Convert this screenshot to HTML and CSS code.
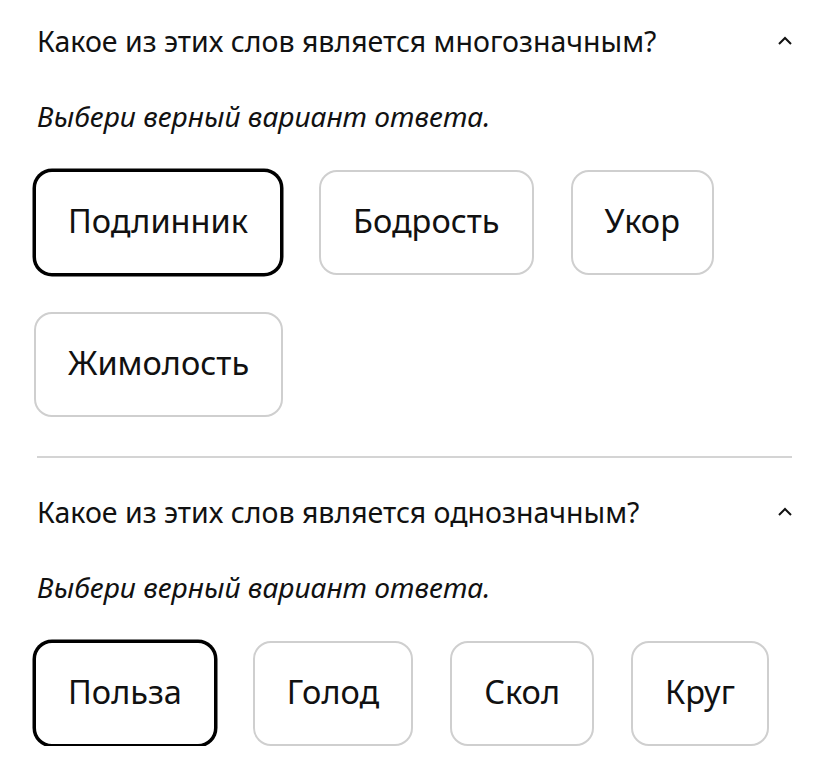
FILE: index.html
```html
<!DOCTYPE html>
<html lang="ru">
<head>
<meta charset="utf-8">
<link rel="stylesheet" href="styles.css">
</head>
<body>
<section class="q">
  <div class="q-head">
    <h2 class="q-title">Какое из этих слов является многозначным?</h2>
    <svg class="chev" width="16" height="16" viewBox="0 0 16 16"><polyline points="2,11 8,5 14,11" fill="none" stroke="#111" stroke-width="2"/></svg>
  </div>
  <p class="q-hint">Выбери верный вариант ответа.</p>
  <div class="opts">
    <button class="opt sel">Подлинник</button>
    <button class="opt">Бодрость</button>
    <button class="opt">Укор</button>
    <button class="opt">Жимолость</button>
  </div>
</section>
<hr class="div">
<section class="q">
  <div class="q-head">
    <h2 class="q-title">Какое из этих слов является однозначным?</h2>
    <svg class="chev" width="16" height="16" viewBox="0 0 16 16"><polyline points="2,11 8,5 14,11" fill="none" stroke="#111" stroke-width="2"/></svg>
  </div>
  <p class="q-hint">Выбери верный вариант ответа.</p>
  <div class="opts">
    <button class="opt sel">Польза</button>
    <button class="opt">Голод</button>
    <button class="opt">Скол</button>
    <button class="opt">Круг</button>
  </div>
</section>
</body>
</html>
```
FILE: styles.css
```css
html, body {
  margin: 0;
  padding: 0;
  background: #fff;
}
body {
  font-family: "Noto Sans", "Open Sans", sans-serif;
  color: #111;
  padding: 0 36px 0 34px;
}
.q {
  padding-top: 36px;
}
.q:first-child {
  padding-top: 23px;
}
.q-head {
  display: flex;
  align-items: center;
  justify-content: space-between;
  padding-left: 3px;
}
.q-title {
  margin: 0;
  font-size: 28.5px;
  font-weight: 400;
  line-height: 36px;
}
.chev {
  margin-right: -1px;
  display: block;
}
.q-hint {
  margin: 39px 0 0 3px;
  font-size: 28.2px;
  font-style: italic;
  line-height: 36px;
}
.opts {
  display: flex;
  flex-wrap: wrap;
  column-gap: 37px;
  row-gap: 37px;
  margin-top: 36px;
}
.opt {
  font-family: inherit;
  font-size: 32.5px;
  color: #111;
  background: #fff;
  border: 2px solid #cfcfcf;
  border-radius: 18px;
  height: 105px;
  padding: 0 32px 4px;
  cursor: pointer;
}
.opt.sel {
  border-color: #000;
  box-shadow: 0 0 0 1.5px #000;
}
.div {
  margin: 39px 0 0;
  border: 0;
  border-top: 2px solid #d4d4d4;
  margin-left: 3px;
}
```
